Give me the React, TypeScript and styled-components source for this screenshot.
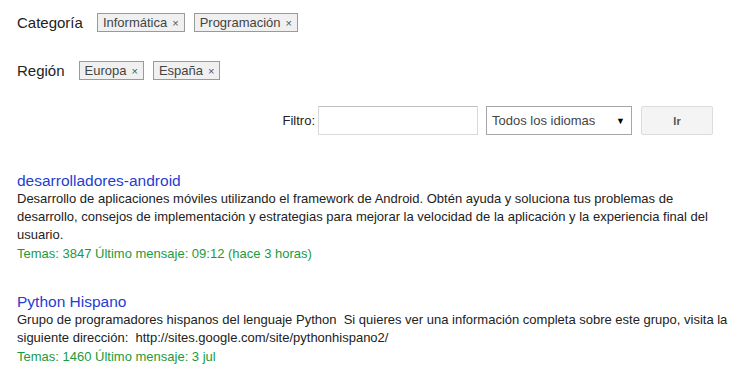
import styled, { createGlobalStyle } from 'styled-components';

const GlobalStyle = createGlobalStyle`
  body {
    margin: 0;
    background: #fff;
    font-family: Arial, 'Liberation Sans', sans-serif;
    color: #222;
  }
`;

const groups = [
  {
    name: 'desarrolladores-android',
    description:
      'Desarrollo de aplicaciones móviles utilizando el framework de Android. Obtén ayuda y soluciona tus problemas de desarrollo, consejos de implementación y estrategias para mejorar la velocidad de la aplicación y la experiencia final del usuario.',
    meta: 'Temas: 3847 Último mensaje: 09:12 (hace 3 horas)',
  },
  {
    name: 'Python Hispano',
    description:
      'Grupo de programadores hispanos del lenguaje Python\u00a0 Si quieres ver una información completa sobre este grupo, visita la siguiente dirección:\u00a0 http://sites.google.com/site/pythonhispano2/',
    meta: 'Temas: 1460 Último mensaje: 3 jul',
  },
];

export default function App() {
  return (
    <>
      <GlobalStyle />
      <Page>
        <FacetRow>
          <FacetLabel>Categoría</FacetLabel>
          <Chips>
            <Chip>Informática <Remove>×</Remove></Chip>
            <Chip>Programación <Remove>×</Remove></Chip>
          </Chips>
        </FacetRow>
        <FacetRow>
          <FacetLabel>Región</FacetLabel>
          <Chips>
            <Chip>Europa <Remove>×</Remove></Chip>
            <Chip>España <Remove>×</Remove></Chip>
          </Chips>
        </FacetRow>

        <FilterBar>
          <FilterLabel>Filtro:</FilterLabel>
          <FilterInput type="text" />
          <LangSelect>
            <span>Todos los idiomas</span>
            <Arrow>▼</Arrow>
          </LangSelect>
          <GoButton>Ir</GoButton>
        </FilterBar>

        <Results>
          {groups.map((g) => (
            <Group key={g.name}>
              <GroupTitle href="#">{g.name}</GroupTitle>
              <GroupDesc>{g.description}</GroupDesc>
              <GroupMeta>{g.meta}</GroupMeta>
            </Group>
          ))}
        </Results>
      </Page>
    </>
  );
}

const Page = styled.div`
  width: 712px;
  padding: 12px 0 0 17px;
`;

const FacetRow = styled.div`
  display: flex;
  align-items: center;
  height: 21px;
  margin-bottom: 27px;
`;

const FacetLabel = styled.div`
  font-size: 15px;
  color: #222;
  margin-right: 14px;
`;

const Chips = styled.div`
  display: flex;
  gap: 9px;
`;

const Chip = styled.span`
  display: inline-flex;
  align-items: center;
  height: 17px;
  padding: 0 5px;
  border: 1px solid #9a9a9a;
  background: #f0f0f0;
  font-size: 13px;
  color: #444;
`;

const Remove = styled.span`
  margin-left: 5px;
  font-size: 11px;
  color: #555;
`;

const FilterBar = styled.div`
  display: flex;
  align-items: center;
  justify-content: flex-end;
  margin: -2px 16px 0 0;
  height: 29px;
`;

const FilterLabel = styled.label`
  font-size: 13px;
  color: #222;
  margin-right: 3px;
`;

const FilterInput = styled.input`
  box-sizing: border-box;
  width: 160px;
  height: 29px;
  margin: 0 8px 0 0;
  border: 1px solid #d9d9d9;
  border-top-color: #c0c0c0;
`;

const LangSelect = styled.div`
  box-sizing: border-box;
  display: flex;
  align-items: center;
  justify-content: space-between;
  width: 146px;
  height: 29px;
  padding: 0 6px 0 5px;
  margin-right: 9px;
  border: 1px solid #a6a6a6;
  font-size: 13px;
  color: #444;
`;

const Arrow = styled.span`
  font-size: 9px;
  color: #000;
`;

const GoButton = styled.div`
  box-sizing: border-box;
  display: flex;
  align-items: center;
  justify-content: center;
  width: 72px;
  height: 29px;
  border: 1px solid #dcdcdc;
  border-radius: 2px;
  background: #f4f4f4;
  font-size: 11px;
  font-weight: bold;
  color: #555;
`;

const Results = styled.div`
  margin-top: 37px;
`;

const Group = styled.div`
  margin-bottom: 30px;

  &:last-child {
    margin-bottom: 0;
  }
`;

const GroupTitle = styled.a`
  display: block;
  font-size: 15.5px;
  line-height: 18px;
  color: #1f3dd4;
  text-decoration: none;
`;

const GroupDesc = styled.div`
  font-size: 13px;
  line-height: 18px;
  color: #222;
`;

const GroupMeta = styled.div`
  font-size: 13px;
  line-height: 19px;
  color: #1c9a3c;
`;
